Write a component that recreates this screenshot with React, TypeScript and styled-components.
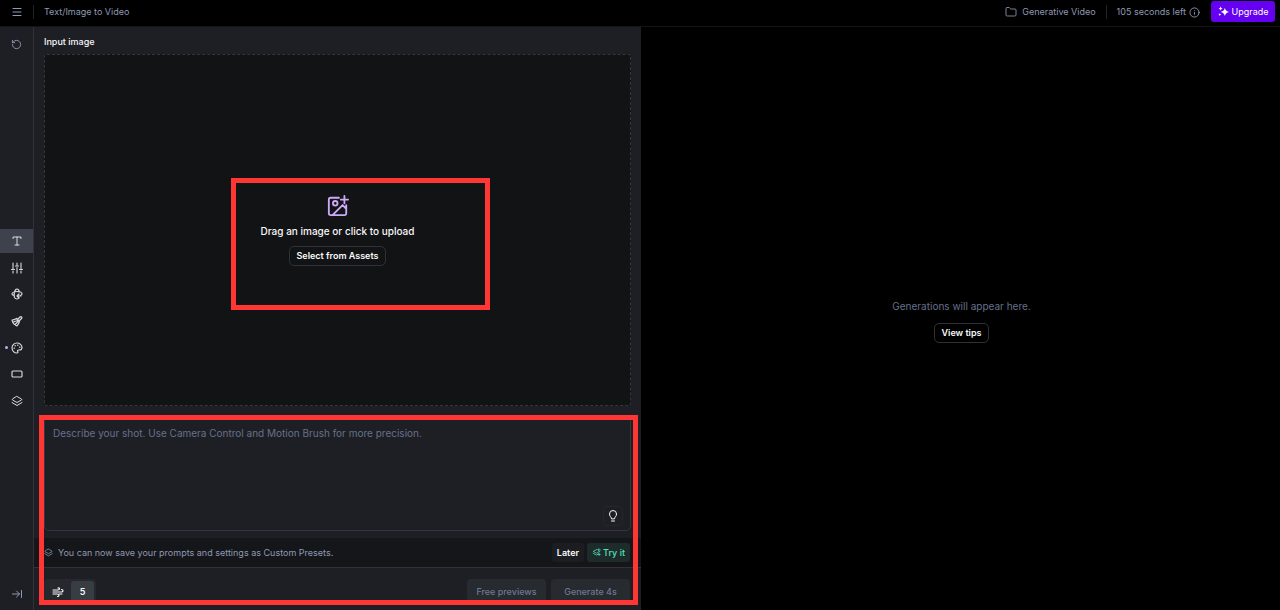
import React from 'react';
import styled, { createGlobalStyle, css } from 'styled-components';
import { ArrowRightToLine, Folder, Info, Menu, Palette, RectangleHorizontal, RotateCcw } from 'lucide-react';

const color = {
  panel: '#1e1f24',
  line: '#303238',
  muted: '#8f99b3',
  faint: '#65718b',
  text: '#f8f8fa',
  mark: '#ff3634',
};

const GlobalStyle = createGlobalStyle`
  *, *::before, *::after { box-sizing: border-box; }
  body { margin: 0; background: #000; color: ${color.text}; font: 400 9px/12px Inter, sans-serif; }
  button, textarea { font: inherit; color: inherit; margin: 0; }
  button { cursor: pointer; }
  svg { display: block; flex: none; }
`;

const Page = styled.div`
  display: flex;
  flex-direction: column;
  height: 100vh;
  min-height: 480px;
`;

const TopBar = styled.header`
  display: flex;
  align-items: center;
  flex: none;
  height: 27px;
  padding: 0 5px 2px 0;
  border-bottom: 1px solid #141416;
  color: ${color.muted};
`;

const IconButton = styled.button`
  display: flex;
  align-items: center;
  justify-content: center;
  width: 33px;
  height: 22px;
  padding: 0;
  border: 0;
  background: none;
  color: ${color.muted};
`;

const Divider = styled.span`
  width: 1px;
  height: 14px;
  background: #222327;
`;

const PageTitle = styled.h1`
  flex: 1;
  margin: 0;
  padding-left: 10px;
  font: inherit;
`;

const ProjectLink = styled.a`
  display: flex;
  align-items: center;
  gap: 5px;
  padding-right: 10px;
  color: inherit;
  text-decoration: none;
`;

const Credits = styled.span`
  display: flex;
  align-items: center;
  gap: 3px;
  padding: 0 11px 0 10px;
`;

const UpgradeButton = styled.button`
  display: flex;
  align-items: center;
  justify-content: center;
  gap: 3px;
  align-self: flex-start;
  width: 64px;
  height: 21px;
  margin-top: 1px;
  padding: 0;
  border: 0;
  border-radius: 3px;
  background: #6500f0;
  color: #fff;
`;

const Workspace = styled.div`
  display: grid;
  grid-template-columns: 34px minmax(0, 607fr) minmax(0, 639fr);
  flex: 1;
  min-height: 0;
`;

const Sidebar = styled.aside`
  display: flex;
  flex-direction: column;
  justify-content: space-between;
  padding: 6px 0 5px;
  border-right: 1px solid ${color.line};
  background: ${color.panel};
`;

const Tools = styled.nav`
  display: flex;
  flex-direction: column;
  justify-content: space-between;
  height: 188px;
  padding-top: 4px;
`;

const Tool = styled.button<{ $active?: boolean }>`
  position: relative;
  display: flex;
  align-items: center;
  justify-content: center;
  width: 100%;
  height: 24px;
  padding: 0;
  border: 0;
  background: ${(p) => (p.$active ? '#3d424c' : 'transparent')};
  color: #d9dadd;
`;

const ChangedDot = styled.span`
  position: absolute;
  left: 5px;
  width: 3px;
  height: 3px;
  border-radius: 50%;
  background: #c9a5f7;
`;

const Editor = styled.main`
  display: flex;
  flex-direction: column;
  min-height: 0;
  background: ${color.panel};
`;

const SectionTitle = styled.h2`
  margin: 0;
  padding: 9px 10px 6px;
  font-size: 9px;
  font-weight: 500;
  line-height: 12px;
`;

const DropZone = styled.section`
  position: relative;
  display: flex;
  flex-direction: column;
  align-items: center;
  justify-content: center;
  flex: 1;
  margin: 0 10px;
  border: 1px dashed #34363c;
  border-radius: 3px;
  background: #121315;
`;

const UploadLabel = styled.label`
  display: flex;
  flex-direction: column;
  align-items: center;
  gap: 7px;
  margin-bottom: 8px;
  font-size: 10px;
  font-weight: 500;
  line-height: 14px;
  cursor: pointer;
  svg { color: #cdaaf8; }
`;

const HiddenFile = styled.input`
  position: absolute;
  width: 1px;
  height: 1px;
  opacity: 0;
`;

const OutlineButton = styled.button`
  height: 20px;
  padding: 0 6px;
  border: 1px solid #303138;
  border-radius: 5px;
  background: transparent;
  font-weight: 600;
`;

const Highlight = styled.div`
  position: absolute;
  border: 5px solid ${color.mark};
  pointer-events: none;
`;

const UploadHighlight = styled(Highlight)`
  top: calc(50% - 52px);
  left: calc(50% - 107px);
  width: 259px;
  height: 132px;
`;

const ComposerHighlight = styled(Highlight)`
  inset: 9px 3px 5px 5px;
`;

const Composer = styled.section`
  position: relative;
  flex: none;
  padding-top: 11px;
`;

const PromptBox = styled.div`
  position: relative;
  margin: 0 10px 7px;
`;

const Prompt = styled.textarea`
  display: block;
  width: 100%;
  height: 114px;
  padding: 8px;
  border: 1px solid #34363d;
  border-radius: 5px;
  outline: 0;
  background: transparent;
  font-size: 10px;
  line-height: 14px;
  resize: none;
  &::placeholder { color: ${color.faint}; opacity: 1; }
`;

const IdeaButton = styled.button`
  position: absolute;
  right: 8px;
  bottom: 5px;
  display: flex;
  align-items: center;
  justify-content: center;
  width: 20px;
  height: 20px;
  padding: 0;
  border: 1px solid #25262b;
  border-radius: 4px;
  background: transparent;
`;

const Notice = styled.div`
  display: flex;
  align-items: center;
  height: 30px;
  padding: 0 11px 0 10px;
  border-bottom: 1px solid ${color.line};
  background: #151619;
  color: ${color.muted};
`;

const NoticeText = styled.p`
  flex: 1;
  margin: 0 0 0 5px;
`;

const SmallButton = styled.button<{ $accent?: boolean }>`
  display: flex;
  align-items: center;
  justify-content: center;
  gap: 2px;
  height: 19px;
  padding: 0 5px;
  border: 0;
  border-radius: 3px;
  background: #1c1d21;
  color: ${color.text};
  font-weight: 600;
  ${(p) => p.$accent && css`
    margin-left: 3px;
    background: #1d2b2b;
    color: #55e0b5;
    font-weight: 500;
  `}
`;

const Actions = styled.footer`
  display: flex;
  justify-content: space-between;
  height: 42px;
  padding: 11px 11px 7px 10px;
`;

const Settings = styled.div`
  display: flex;
  gap: 2px;
  padding: 2px;
  border-radius: 4px;
  background: #26282d;
`;

const Setting = styled.button<{ $filled?: boolean }>`
  display: flex;
  align-items: center;
  justify-content: center;
  width: 23px;
  height: 21px;
  padding: 0;
  border: 0;
  border-radius: 3px;
  background: ${(p) => (p.$filled ? '#383c43' : 'transparent')};
  font-weight: 600;
`;

const ActionGroup = styled.div`
  display: flex;
  gap: 5px;
`;

const GenerateButton = styled.button`
  width: 79px;
  padding: 2px 0 0;
  border: 0;
  border-radius: 4px;
  background: #272a2f;
  color: #6d7894;
  font-weight: 500;
`;

const Results = styled.section`
  display: flex;
  flex-direction: column;
  align-items: center;
  justify-content: center;
  gap: 10px;
  padding: 5px 0 0 2px;
  background: #000;
`;

const EmptyText = styled.p`
  margin: 0;
  color: ${color.faint};
  font-size: 10px;
  line-height: 14px;
`;

type GlyphProps = { size?: number; children: React.ReactNode; width?: number };

const Glyph = ({ size = 12, width = 2, children }: GlyphProps) => (
  <svg width={size} height={size} viewBox="0 0 24 24" fill="none" stroke="currentColor" strokeWidth={width} strokeLinecap="round" strokeLinejoin="round" aria-hidden="true">
    {children}
  </svg>
);

const LayersGlyph = ({ size = 12 }: { size?: number }) => (
  <Glyph size={size}>
    <path d="M12 3 21 8q1 1 0 2l-9 5-9-5q-1-1 0-2Z" />
    <path d="m2 15 10 6 10-6" />
  </Glyph>
);

const tools = [
  { name: 'Text prompt', active: true, icon: <Glyph><path d="M4 7V4h16v3M12 4v16M8 20h8" /></Glyph> },
  { name: 'Settings', icon: <Glyph width={2.2}><path d="M4 2v11M4 18v4M1 15h6M12 2v4M12 11v11M9 8h6M20 2v11M20 18v4M17 15h6" /></Glyph> },
  { name: 'Camera control', icon: <Glyph width={2.4}><path d="M6 15c-3-1-4-2-4-3 0-3 5-5 10-5s10 2 10 5c0 1-1 2-3 3M7 8c1-4 3-6 5-6s4 2 5 6M7 8c-1 4-1 8 0 11 1 2 3 3 5 3 2 0 3-1 4-3M16 12l-4 4 4 4M12 16h8" /></Glyph> },
  { name: 'Motion brush', icon: <Glyph width={2.4}><path d="m11 7 6 6M13 9l5-5c2-2 5 1 3 3l-5 5M11 7c-3 2-6 3-9 3 1 6 5 10 10 12 2-3 4-6 5-9M5 14l8-3M9 18l5-5" /></Glyph> },
  { name: 'Style', changed: true, icon: <Palette size={12} strokeWidth={2.3} /> },
  { name: 'Aspect ratio', icon: <RectangleHorizontal size={12} strokeWidth={2.3} /> },
  { name: 'Presets', icon: <LayersGlyph /> },
];

export default function App() {
  return (
    <Page>
      <GlobalStyle />
      <TopBar>
        <IconButton aria-label="Menu"><Menu size={12} /></IconButton>
        <Divider />
        <PageTitle>Text/Image to Video</PageTitle>
        <ProjectLink href="#project"><Folder size={12} strokeWidth={1.7} />Generative Video</ProjectLink>
        <Divider />
        <Credits>105 seconds left<Info size={11} /></Credits>
        <UpgradeButton>
          <svg width="11" height="11" viewBox="0 0 24 24" fill="currentColor" aria-hidden="true">
            <path d="M15 4q1 7 9 9-8 2-9 9-1-7-9-9 8-2 9-9ZM6 1q0 4 4 5-4 0-4 4-1-4-5-4 4-1 5-5ZM4 15q0 3 3 3-3 1-3 4-1-3-3-4 3 0 3-3Z" />
          </svg>
          Upgrade
        </UpgradeButton>
      </TopBar>
      <Workspace>
        <Sidebar>
          <IconButton aria-label="Reset"><RotateCcw size={11} /></IconButton>
          <Tools aria-label="Tools">
            {tools.map((tool) => (
              <Tool key={tool.name} $active={tool.active} aria-label={tool.name}>
                {tool.changed && <ChangedDot />}
                {tool.icon}
              </Tool>
            ))}
          </Tools>
          <IconButton aria-label="Expand sidebar"><ArrowRightToLine size={12} /></IconButton>
        </Sidebar>
        <Editor>
          <SectionTitle>Input image</SectionTitle>
          <DropZone>
            <UploadLabel htmlFor="image-file">
              <Glyph size={22} width={2}>
                <path d="M13 3H4a2 2 0 0 0-2 2v15a2 2 0 0 0 2 2h15a2 2 0 0 0 2-2v-9M19 1v8M15 5h8M6 22 17 11l4 4" />
                <circle cx="9" cy="9" r="2.5" />
              </Glyph>
              Drag an image or click to upload
            </UploadLabel>
            <HiddenFile id="image-file" type="file" accept="image/*" />
            <OutlineButton>Select from Assets</OutlineButton>
            <UploadHighlight />
          </DropZone>
          <Composer>
            <PromptBox>
              <Prompt aria-label="Prompt" placeholder="Describe your shot. Use Camera Control and Motion Brush for more precision." />
              <IdeaButton aria-label="Prompt ideas">
                <Glyph><path d="M9 17c0-3-4-4-4-9a7 7 0 0 1 14 0c0 5-4 6-4 9ZM9 22h6" /></Glyph>
              </IdeaButton>
            </PromptBox>
            <Notice>
              <LayersGlyph size={9} />
              <NoticeText>You can now save your prompts and settings as Custom Presets.</NoticeText>
              <SmallButton>Later</SmallButton>
              <SmallButton $accent>
                <Glyph size={9}><path d="M13 4 3 9l9 5 9-5M3 14l9 5 5-3M18 2v6M15 5h7M19 14v6M16 17h6" /></Glyph>
                Try it
              </SmallButton>
            </Notice>
            <Actions>
              <Settings>
                <Setting aria-label="Motion">
                  <Glyph width={2.4}><path d="M2 8h10c4 0 4-5 0-4M2 12h17c4 0 4-5 0-5M2 16h8c5 0 5 5 1 5M14 16h6" /></Glyph>
                </Setting>
                <Setting $filled aria-label="Motion amount 5">5</Setting>
              </Settings>
              <ActionGroup>
                <GenerateButton>Free previews</GenerateButton>
                <GenerateButton>Generate 4s</GenerateButton>
              </ActionGroup>
            </Actions>
            <ComposerHighlight />
          </Composer>
        </Editor>
        <Results>
          <EmptyText>Generations will appear here.</EmptyText>
          <OutlineButton>View tips</OutlineButton>
        </Results>
      </Workspace>
    </Page>
  );
}
